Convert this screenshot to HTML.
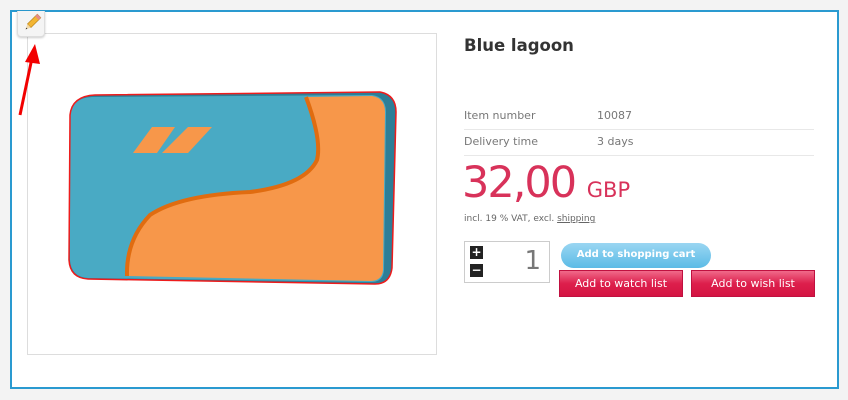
<!DOCTYPE html>
<html><head><meta charset="utf-8"><style>
*{margin:0;padding:0;box-sizing:border-box}
body{width:848px;height:400px;background:#f3f3f3;font-family:"DejaVu Sans","Liberation Sans",sans-serif;position:relative;overflow:hidden}
.frame{position:absolute;left:10px;top:10px;width:829px;height:379px;border:2px solid #2a9ad0;background:#fff}
.tab{position:absolute;left:17px;top:11px;width:28px;height:26px;background:#f4f4f4;border:1px solid #ddd;border-top:none;border-radius:0 0 4px 4px;box-shadow:0 1px 2px rgba(0,0,0,.2);z-index:3}
.img{position:absolute;left:27px;top:33px;width:410px;height:322px;border:1px solid #ddd;background:#fff}
h1{position:absolute;left:464px;top:36px;font-size:16.5px;font-weight:bold;color:#333}
.row{position:absolute;left:464px;width:350px;height:26px;border-bottom:1px solid #e8e8e8;font-size:11px;color:#777;line-height:24px}
.row span{position:absolute;left:133px}
.price{position:absolute;left:462px;top:158px;color:#d8325a;font-size:43px;letter-spacing:-2px;line-height:50px}
.price small{font-size:21px;letter-spacing:0}
.vat{position:absolute;left:464px;top:214px;font-size:9px;color:#666}
.vat u{color:#666}
.qty{position:absolute;left:464px;top:241px;width:86px;height:42px;border:1px solid #ccc;background:#fff}
.qb{position:absolute;left:5px;width:13px;height:13px;background:#222;color:#fff;font-size:12px;line-height:12px;text-align:center;font-weight:bold}
.qty .n{position:absolute;right:8px;top:4px;font-size:26px;color:#777}
.cart{position:absolute;left:561px;top:243px;width:150px;height:25px;border-radius:13px;background:linear-gradient(#9ad6f2,#5bbbe6);color:#fff;font-size:10px;font-weight:bold;text-align:center;line-height:24px}
.red{position:absolute;top:270px;width:124px;height:27px;background:linear-gradient(#f06a8a,#dd1f4c 50%,#d41442);border:1px solid #c01040;color:#fff;font-size:11px;text-align:center;line-height:25px}
</style></head><body>
<div class="frame"></div>
<div class="img"></div>
<div class="tab"><svg width="28" height="26" viewBox="0 0 28 26"><g transform="rotate(45 14 12)"><rect x="11.5" y="2" width="5" height="14" fill="#f2b533" stroke="#b07a10" stroke-width=".6"/><rect x="11.5" y="2" width="5" height="3" fill="#e58a8a"/><polygon points="11.5,16 16.5,16 14,21" fill="#f2d9a8"/><polygon points="13.2,19.3 14.8,19.3 14,21" fill="#333"/></g></svg></div>
<svg style="position:absolute;left:14px;top:40px;z-index:2" width="30" height="80" viewBox="0 0 30 80"><line x1="6" y1="75" x2="18" y2="18" stroke="#f20000" stroke-width="3"/><polygon points="21,4 11,22 26,24" fill="#f20000"/></svg>
<svg style="position:absolute;left:0;top:0" width="440" height="360">
<path d="M95,95 L380,92 Q396,95 396,112 L392,268 Q390,284 375,284 L88,279 Q70,278 69,260 L70,115 Q72,96 95,95Z" fill="#2d7e97"/>
<path d="M92,97 L372,95 Q386,97 386,112 L384,270 Q383,282 372,282 L88,278 Q71,277 70,260 L70,116 Q71,98 92,97Z" fill="#49aac4"/>
<path d="M306,97 L372,96 Q385,98 385,112 L383,270 Q382,281 370,281 L127,276 Q126,240 150,215 Q180,195 250,192 Q305,185 317,160 Q322,140 306,97Z" fill="#f7974a"/>
<path d="M306,97 Q322,140 317,160 Q305,185 250,192 Q180,195 150,215 Q126,240 127,276" fill="none" stroke="#e06c10" stroke-width="4"/>
<polygon points="152,127 175,127 157,153 133,153" fill="#f7974a"/>
<polygon points="188,127 212,127 188,153 162,153" fill="#f7974a"/>
<path d="M95,95 L380,92 Q396,95 396,112 L392,268 Q390,284 375,284 L88,279 Q70,278 69,260 L70,115 Q72,96 95,95Z" fill="none" stroke="#ee1c1c" stroke-width="1.5"/>
</svg>
<h1>Blue lagoon</h1>
<div class="row" style="top:104px">Item number<span>10087</span></div>
<div class="row" style="top:130px">Delivery time<span>3 days</span></div>
<div class="price">32,00 <small>GBP</small></div>
<div class="vat">incl. 19 % VAT, excl. <u>shipping</u></div>
<div class="qty"><div class="qb" style="top:4px">+</div><div class="qb" style="top:22px">−</div><div class="n">1</div></div>
<div class="cart">Add to shopping cart</div>
<div class="red" style="left:559px">Add to watch list</div>
<div class="red" style="left:691px">Add to wish list</div>
</body></html>
